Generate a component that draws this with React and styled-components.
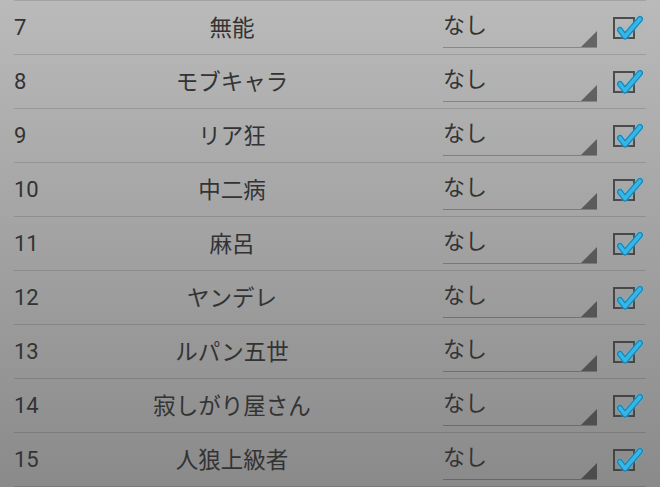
import React from 'react';
import styled, { createGlobalStyle } from 'styled-components';

const GlobalStyle = createGlobalStyle`
    html, body {
        margin: 0;
        padding: 0;
        height: 100%;
    }
    body {
        font-family: Roboto, "Noto Sans CJK JP", sans-serif;
        background: linear-gradient(to bottom, #bababa 0%, #8a8a8a 100%);
        background-attachment: fixed;
        overflow: hidden;
    }
`;

const ListStyled = styled.div`
    width: 660px;
    height: 487px;
    border-top: 1px solid transparent;
    box-sizing: border-box;
    position: relative;

    &::before {
        content: '';
        position: absolute;
        top: -1px;
        left: 14px;
        right: 14px;
        height: 1px;
        background: rgba(0, 0, 0, 0.13);
    }
`;

const RowStyled = styled.div`
    display: flex;
    align-items: center;
    height: 53px;
    margin: 0 14px;
    border-bottom: 1px solid rgba(0, 0, 0, 0.13);
    color: #333;
`;

const NumberStyled = styled.div`
    width: 90px;
    font-size: 22px;
`;

const NameStyled = styled.div`
    width: 256px;
    padding-bottom: 4px;
    text-align: center;
    font-size: 22.5px;
`;

const SpinnerStyled = styled.div`
    position: relative;
    align-self: flex-end;
    margin: 0 0 6px 83px;
    width: 154px;
    height: 36px;
    box-sizing: border-box;
    border-bottom: 1px solid rgba(0, 0, 0, 0.25);
    font-size: 22px;
    line-height: 28px;

    &::after {
        content: '';
        position: absolute;
        right: 0;
        bottom: 0;
        width: 0;
        height: 0;
        border-style: solid;
        border-width: 0 0 16px 16px;
        border-color: transparent transparent rgba(0, 0, 0, 0.45) transparent;
    }
`;

const CheckBoxStyled = styled.div`
    position: relative;
    margin-left: 16px;
    width: 22px;
    height: 22px;
    box-sizing: border-box;
    border: 2px solid rgba(50, 50, 50, 0.8);

    svg {
        position: absolute;
        left: -4px;
        top: -6px;
        overflow: visible;
        filter: drop-shadow(0 0 1.5px rgba(80, 200, 255, 0.5));
    }
`;

const rows = [
    { no: 7, name: '無能' },
    { no: 8, name: 'モブキャラ' },
    { no: 9, name: 'リア狂' },
    { no: 10, name: '中二病' },
    { no: 11, name: '麻呂' },
    { no: 12, name: 'ヤンデレ' },
    { no: 13, name: 'ルパン五世' },
    { no: 14, name: '寂しがり屋さん' },
    { no: 15, name: '人狼上級者' },
];

function Check() {
    const d = 'M9 17 L14 23.5 L29 6';
    return (
        <svg width="34" height="30" viewBox="0 0 34 30">
            <path d={d} fill="none" stroke="#1786b4" strokeWidth="6" strokeLinecap="round" strokeLinejoin="round" />
            <path d={d} fill="none" stroke="#35b6e6" strokeWidth="3.6" strokeLinecap="round" strokeLinejoin="round" />
        </svg>
    );
}

function App() {
    return (
        <>
            <GlobalStyle />
            <ListStyled>
                {rows.map((r) => (
                    <RowStyled key={r.no}>
                        <NumberStyled>{r.no}</NumberStyled>
                        <NameStyled>{r.name}</NameStyled>
                        <SpinnerStyled>なし</SpinnerStyled>
                        <CheckBoxStyled>
                            <Check />
                        </CheckBoxStyled>
                    </RowStyled>
                ))}
            </ListStyled>
        </>
    );
}

export default App;
